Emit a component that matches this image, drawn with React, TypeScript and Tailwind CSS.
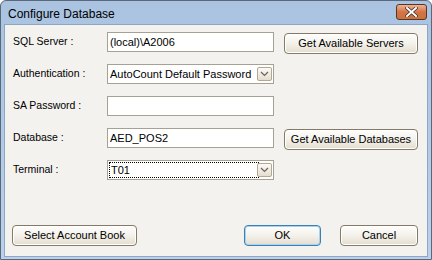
const font = { fontFamily: '"Liberation Sans", Arial, sans-serif' };

function TextBox({ value, combo, focused }: { value?: string; combo?: boolean; focused?: boolean }) {
  return (
    <div className="w-[167px] h-[20px] bg-white border border-[#a6a293] flex items-center relative">
      {focused ? (
        <div className="ml-[1px] h-[16px] w-[150px] border border-dotted border-black flex items-center pl-[1px]">
          <span className="text-[11px] text-black leading-none">{value}</span>
        </div>
      ) : (
        <span className="pl-[2px] text-[11px] text-black leading-none">{value}</span>
      )}
      {combo && (
        <div className="absolute right-[1px] top-[2px] w-[15px] h-[14px] border border-[#b3a88f] rounded-[2px] bg-gradient-to-b from-[#fbfaf7] to-[#e4ded0] flex items-center justify-center">
          <svg width="9" height="6" viewBox="0 0 9 6">
            <path d="M1 1 L4.5 4.5 L8 1" fill="none" stroke="#6d6455" strokeWidth="1.2" />
          </svg>
        </div>
      )}
    </div>
  );
}

function Button({ label, width, isDefault }: { label: string; width: string; isDefault?: boolean }) {
  return (
    <button
      className={
        width +
        " h-[21px] rounded-[4px] border text-[11px] text-black leading-none bg-gradient-to-b from-[#fefefd] via-[#f4f1ea] to-[#e3ddcf] " +
        (isDefault
          ? "border-[#3c7fb1] shadow-[inset_0_0_0_1px_#a6d3f4]"
          : "border-[#857a68] shadow-[inset_0_0_0_1px_#ffffff]")
      }
    >
      {label}
    </button>
  );
}

function Row({ label, children }: { label: string; children: React.ReactNode }) {
  return (
    <div className="h-[22px] flex items-center">
      <div className="w-[94px] text-[10.5px] text-black">{label}</div>
      {children}
    </div>
  );
}

export default function App() {
  return (
    <div style={font} className="w-[432px] h-[260px] bg-white">
      <div className="w-[432px] h-[260px] rounded-t-[6px] border border-[#5b6878] bg-gradient-to-b from-[#a9c3e1] to-[#b9d1ec] flex flex-col px-[3px] pb-[2px]">
        {/* title bar */}
        <div className="h-[23px] flex items-start justify-between">
          <span className="pl-[4px] pt-[4px] text-[12px] text-black">
            Configure Database
          </span>
          <div className="mt-[3px] mr-[1px] w-[31px] h-[16px] rounded-[3px] border border-[#5a3524] bg-gradient-to-b from-[#ebb396] via-[#d47443] to-[#c8733f] flex items-center justify-center">
            <svg width="13" height="10" viewBox="0 0 13 10">
              <path d="M2 1 L11 9 M11 1 L2 9" stroke="#3d2a2a" strokeWidth="3.4" strokeLinecap="square" />
              <path d="M2 1 L11 9 M11 1 L2 9" stroke="#ffffff" strokeWidth="2" strokeLinecap="square" />
            </svg>
          </div>
        </div>
        {/* content */}
        <div className="flex-1 bg-[#f4f2ee] border border-[#8fa6c1] flex flex-col pl-[8px] pt-[6px]">
          <div className="flex flex-col gap-[10px]">
            <Row label="SQL Server :">
              <TextBox value="(local)\A2006" />
              <div className="ml-[10px]">
                <Button label="Get Available Servers" width="w-[134px]" />
              </div>
            </Row>
            <Row label="Authentication :">
              <TextBox value="AutoCount Default Password" combo />
            </Row>
            <Row label="SA Password :">
              <TextBox />
            </Row>
            <Row label="Database :">
              <TextBox value="AED_POS2" />
              <div className="ml-[10px]">
                <Button label="Get Available Databases" width="w-[134px]" />
              </div>
            </Row>
            <Row label="Terminal :">
              <TextBox value="T01" combo focused />
            </Row>
          </div>
          <div className="mt-auto mb-[10px] flex items-center">
            <div className="-ml-[1px]">
              <Button label="Select Account Book" width="w-[125px]" />
            </div>
            <div className="ml-[107px]">
              <Button label="OK" width="w-[77px]" isDefault />
            </div>
            <div className="ml-[19px]">
              <Button label="Cancel" width="w-[78px]" />
            </div>
          </div>
        </div>
      </div>
    </div>
  );
}
